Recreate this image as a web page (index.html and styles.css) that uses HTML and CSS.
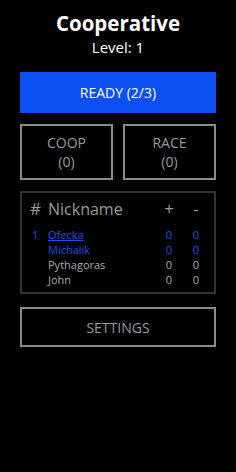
FILE: index.html
```html
<!DOCTYPE html>
<html lang="en">
<head>
    <meta charset="UTF-8">
    <meta name="viewport" content="width=device-width, initial-scale=1.0">
    <title>Cooperative</title>
    <link rel="stylesheet" href="styles.css">
</head>
<body>
    <div class="header">
        <h1>Cooperative</h1>
        <div class="level">Level: 1</div>
    </div>

    <button class="ready">READY (2/3)</button>

    <div class="modes">
        <button class="mode">COOP<br>(0)</button>
        <button class="mode">RACE<br>(0)</button>
    </div>

    <!-- Players table -->
    <div class="players">
        <div class="row head">
            <span class="num">#</span>
            <span class="name">Nickname</span>
            <span class="score">+</span>
            <span class="score">-</span>
        </div>
        <div class="row me">
            <span class="num">1</span>
            <span class="name"><a href="#">Ofecka</a></span>
            <span class="score">0</span>
            <span class="score">0</span>
        </div>
        <div class="row me">
            <span class="num"></span>
            <span class="name">Michalík</span>
            <span class="score">0</span>
            <span class="score">0</span>
        </div>
        <div class="row">
            <span class="num"></span>
            <span class="name">Pythagoras</span>
            <span class="score">0</span>
            <span class="score">0</span>
        </div>
        <div class="row">
            <span class="num"></span>
            <span class="name">John</span>
            <span class="score">0</span>
            <span class="score">0</span>
        </div>
    </div>

    <button class="settings">SETTINGS</button>
</body>
</html>
```

FILE: styles.css
```css
body {
    font-family: "Open Sans", "Noto Sans", sans-serif;
    background: #000;
    color: #fff;
    margin: 0;
    padding: 0 20px;
}

.header {
    text-align: center;
    padding-top: 9px;
}

h1 {
    margin: 0;
    font-size: 20.5px;
    font-weight: 700;
    line-height: 28px;
}

.level {
    font-size: 15px;
    line-height: 20px;
}

button {
    display: block;
    width: 100%;
    font-family: inherit;
    background: #000;
    color: #9a9a9a;
    border: 2px solid #8a8a8a;
    padding: 0;
    cursor: pointer;
}

.ready {
    margin-top: 15px;
    height: 41px;
    background: #0a50f2;
    border: none;
    color: #fff;
    font-size: 14px;
}

.modes {
    display: flex;
    gap: 10px;
    margin-top: 11px;
}

.mode {
    flex: 1;
    height: 56px;
    font-size: 14px;
    line-height: 19px;
}

.players {
    margin-top: 11px;
    height: 103px;
    box-sizing: border-box;
    border: 2px solid #333;
    padding: 4px 4.5px 0 4px;
    color: #aaa;
}

.row {
    display: grid;
    grid-template-columns: 19px 1fr 27px 27px;
    font-size: 11px;
    line-height: 15px;
}

.row.head {
    font-size: 16px;
    line-height: 24px;
    color: #9a9a9a;
    margin-bottom: 6px;
}

.num, .score {
    text-align: center;
}

.row.head .num, .row.head .score {
    font-size: 17px;
}

.name {
    padding-left: 3px;
}

.row.me {
    color: #1f50ee;
}

.row.me a {
    color: inherit;
}

.settings {
    margin-top: 13px;
    height: 40px;
    font-size: 14px;
}
```
